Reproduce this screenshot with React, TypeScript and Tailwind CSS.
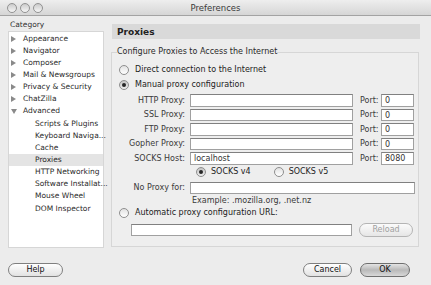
import React from "react";

const Radio = ({ on }: { on?: boolean }) => (
  <span
    className={
      "relative flex h-[10px] w-[10px] shrink-0 items-center justify-center rounded-full border border-[#8e8e8e] " +
      (on
        ? "bg-linear-to-b from-[#c4c4c4] to-[#eeeeee]"
        : "bg-linear-to-b from-[#e2e2e2] to-[#ffffff]")
    }
  >
    {on && <span className="h-[4px] w-[4px] rounded-full bg-[#262626]" />}
  </span>
);

const Field = ({ w, value }: { w: string; value?: string }) => (
  <div
    className={
      w +
      " h-[12.5px] shrink-0 border border-[#a0a0a0] border-t-[#808080] bg-white pl-[3px] text-[8px] leading-[11px] text-[#333]"
    }
  >
    {value}
  </div>
);

const ProxyRow = ({ label, value, port }: { label: string; value?: string; port: string }) => (
  <div className="flex h-[13px] items-center">
    <span className="w-[67px] shrink-0 pr-[1px] text-right text-[#3a3a3a]">{label}</span>
    <span className="w-[4px] shrink-0" />
    <Field w="w-[163px]" value={value} />
    <span className="ml-[7px] w-[21px] shrink-0 text-[#3a3a3a]">Port:</span>
    <Field w="w-[33px]" value={port} />
  </div>
);

const tree: { label: string; kind: "closed" | "open" | "child"; sel?: boolean }[] = [
  { label: "Appearance", kind: "closed" },
  { label: "Navigator", kind: "closed" },
  { label: "Composer", kind: "closed" },
  { label: "Mail & Newsgroups", kind: "closed" },
  { label: "Privacy & Security", kind: "closed" },
  { label: "ChatZilla", kind: "closed" },
  { label: "Advanced", kind: "open" },
  { label: "Scripts & Plugins", kind: "child" },
  { label: "Keyboard Naviga...", kind: "child" },
  { label: "Cache", kind: "child" },
  { label: "Proxies", kind: "child", sel: true },
  { label: "HTTP Networking", kind: "child" },
  { label: "Software Installat...", kind: "child" },
  { label: "Mouse Wheel", kind: "child" },
  { label: "DOM Inspector", kind: "child" },
];

const Light = () => (
  <span className="h-[10px] w-[10px] rounded-full border border-[#929292] bg-linear-to-b from-[#cbcbcb] to-[#f6f6f6]" />
);

const Pill = ({ label, w, def, disabled }: { label: string; w: string; def?: boolean; disabled?: boolean }) => (
  <div
    className={
      w +
      " flex h-[14px] shrink-0 items-center justify-center rounded-full border text-[8px] " +
      (def
        ? "border-[#6f6f6f] bg-linear-to-b from-[#e4e4e4] via-[#b9b9b9] to-[#d8d8d8] text-[#111]"
        : disabled
        ? "border-[#b4b4b4] bg-linear-to-b from-[#fbfbfb] to-[#e6e6e6] text-[#a0a0a0]"
        : "border-[#7f7f7f] bg-linear-to-b from-[#ffffff] via-[#f0f0f0] to-[#e2e2e2] text-[#111]")
    }
  >
    {label}
  </div>
);

export default function App() {
  return (
    <div className="flex h-[285px] w-[431px] flex-col overflow-hidden bg-[#ececec] font-['DejaVu_Sans',sans-serif] text-[8px] leading-[10px] text-[#222]">
      {/* title bar */}
      <div className="relative flex h-[16px] shrink-0 items-center border-b border-[#a3a3a3] bg-linear-to-b from-[#eeeeee] to-[#d6d6d6]">
        <div className="ml-[7px] flex gap-[3px]">
          <Light />
          <Light />
          <Light />
        </div>
        <div className="absolute left-0 right-0 text-center text-[8.5px] text-[#3a3a3a]">Preferences</div>
      </div>

      {/* main */}
      <div className="flex h-[232px] shrink-0 items-start">
        {/* sidebar */}
        <div className="ml-[8px] flex w-[96px] shrink-0 flex-col">
          <div className="mt-[4px] h-[10px] pl-[2px] text-[7.5px] text-[#333]">Category</div>
          <div className="mt-[1px] h-[217px] border border-[#d6d6d6] bg-white pt-[0.5px] text-[7.5px]">
            {tree.map((t) => (
              <div
                key={t.label}
                className={"flex h-[12.15px] items-center whitespace-nowrap " + (t.sel ? "bg-[#e4e4e4]" : "")}
              >
                {t.kind === "closed" && (
                  <svg width="5" height="6" viewBox="0 0 5 6" className="ml-[2px] mr-[7px] shrink-0">
                    <path d="M0 0 L5 3 L0 6 Z" fill="#8a8a8a" />
                  </svg>
                )}
                {t.kind === "open" && (
                  <svg width="6" height="5" viewBox="0 0 6 5" className="ml-[2px] mr-[6px] shrink-0">
                    <path d="M0 0 L6 0 L3 5 Z" fill="#8a8a8a" />
                  </svg>
                )}
                {t.kind === "child" && <span className="w-[26px] shrink-0" />}
                <span className="text-[#2a2a2a]">{t.label}</span>
              </div>
            ))}
          </div>
        </div>

        {/* right panel */}
        <div className="ml-[7px] flex w-[309px] shrink-0 flex-col">
          <div className="ml-[1px] mt-[8px] flex h-[15px] w-[308px] items-center bg-[#d9d9d9] pl-[5px] text-[9px] font-bold text-[#222]">
            Proxies
          </div>
          <fieldset className="mt-[8px] h-[200px] w-[308px] border border-[#d6d6d6] bg-[#eeeeee] pl-[7px]">
            <legend className="ml-[-2px] h-[10px] px-[0px] text-[#2a2a2a]">Configure Proxies to Access the Internet</legend>
            <div className="mt-[5px] flex h-[15px] items-center gap-[6px]">
              <Radio />
              <span>Direct connection to the Internet</span>
            </div>
            <div className="flex h-[15px] items-center gap-[6px]">
              <Radio on />
              <span>Manual proxy configuration</span>
            </div>
            <div className="mt-[2px] flex flex-col gap-[1.5px]">
              <ProxyRow label="HTTP Proxy:" port="0" />
              <ProxyRow label="SSL Proxy:" port="0" />
              <ProxyRow label="FTP Proxy:" port="0" />
              <ProxyRow label="Gopher Proxy:" port="0" />
              <ProxyRow label="SOCKS Host:" value="localhost" port="8080" />
            </div>
            <div className="flex h-[14px] items-center">
              <span className="ml-[77px]">
                <Radio on />
              </span>
              <span className="ml-[5px]">SOCKS v4</span>
              <span className="ml-[23px]">
                <Radio />
              </span>
              <span className="ml-[5px]">SOCKS v5</span>
            </div>
            <div className="mt-[3px] flex h-[12px] items-center">
              <span className="w-[67px] shrink-0 pr-[1px] text-right text-[#3a3a3a]">No Proxy for:</span>
              <span className="w-[4px] shrink-0" />
              <Field w="w-[225px]" />
            </div>
            <div className="mt-[2px] h-[10px] pl-[73px] text-[#3a3a3a]">Example: .mozilla.org, .net.nz</div>
            <div className="mt-[1px] flex h-[12px] items-center gap-[6px]">
              <Radio />
              <span>Automatic proxy configuration URL:</span>
            </div>
            <div className="mt-[4px] flex h-[14px] items-center">
              <span className="ml-[12px]" />
              <Field w="w-[221px]" />
              <span className="ml-[7px]" />
              <Pill label="Reload" w="w-[54px]" disabled />
            </div>
          </fieldset>
        </div>
      </div>

      {/* footer */}
      <div className="mt-[15px] flex h-[14px] shrink-0 items-center">
        <span className="ml-[8px]" />
        <Pill label="Help" w="w-[55px]" />
        <span className="flex-1" />
        <Pill label="Cancel" w="w-[49px]" />
        <span className="ml-[8px]" />
        <Pill label="OK" w="w-[50px]" def />
        <span className="mr-[21px]" />
      </div>
    </div>
  );
}
